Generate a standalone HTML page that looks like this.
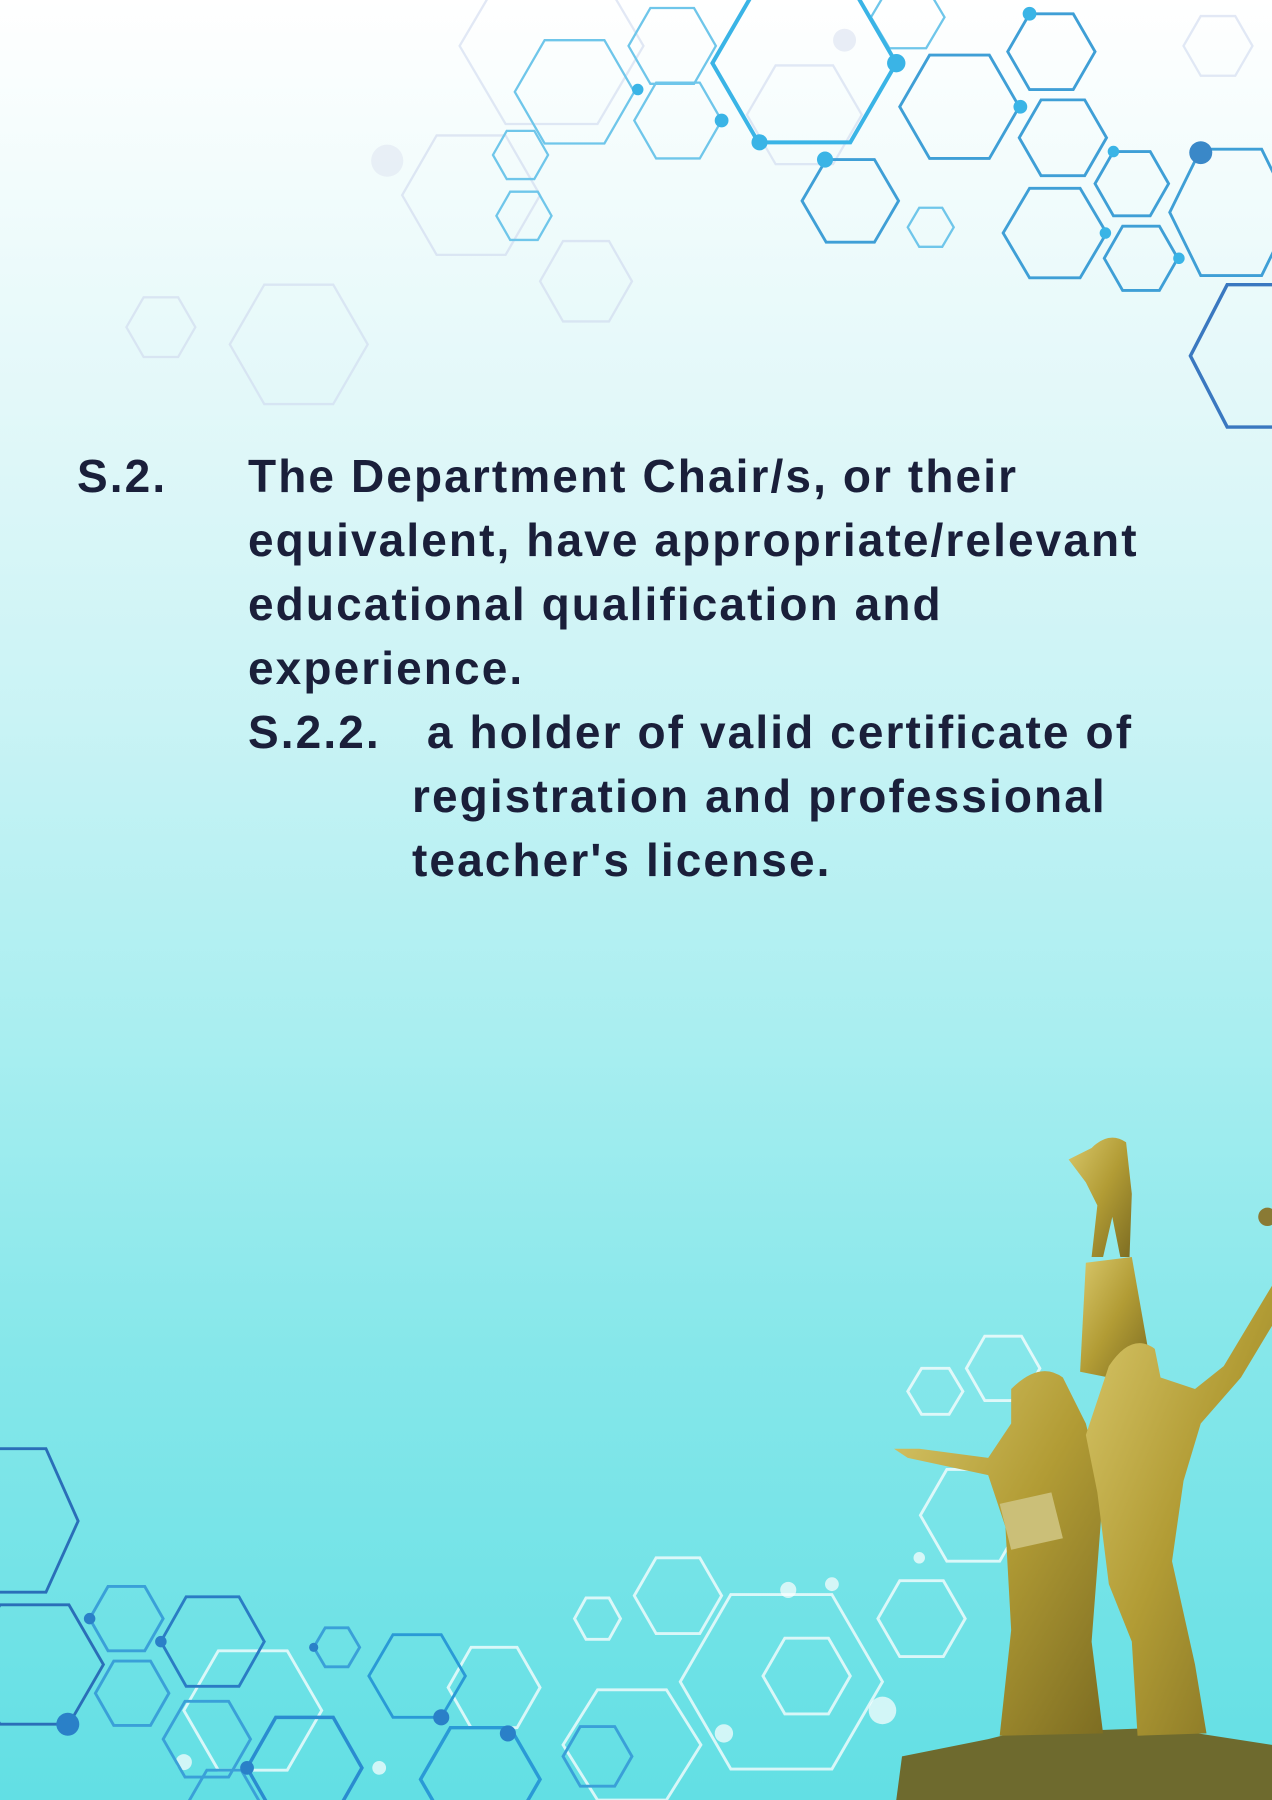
<!DOCTYPE html>
<html><head><meta charset="utf-8"><style>
html,body{margin:0;padding:0}
body{width:1272px;height:1800px;position:relative;overflow:hidden;
background:linear-gradient(180deg,#ffffff 0%,#f2fcfc 10%,#e3f8f9 22%,#c9f3f5 40%,#a8eef0 58%,#86e7ea 75%,#62dfe4 100%);
font-family:"Liberation Sans",sans-serif;color:#1a1f3a}
svg{position:absolute;left:0;top:0}
.t{position:absolute;font-size:46px;font-weight:bold;line-height:64px;letter-spacing:2.1px;white-space:nowrap}
</style></head><body>
<svg width="1272" height="1800" viewBox="0 0 1107 1568" preserveAspectRatio="none">
<defs>
<linearGradient id="g" x1="0" y1="0" x2="1" y2="1"><stop offset="0" stop-color="#d8c76a"/><stop offset=".5" stop-color="#b29c35"/><stop offset="1" stop-color="#7d6d22"/></linearGradient>
</defs>
<g fill="none" stroke-width="2">
<g stroke="#cfd8ee" opacity=".6">
<polygon points="560,40 520,108 440,108 400,40 440,-28 520,-28"/>
<polygon points="470,170 440,222 380,222 350,170 380,118 440,118"/>
<polygon points="550,245 530,280 490,280 470,245 490,210 530,210"/>
<polygon points="320,300 290,352 230,352 200,300 230,248 290,248"/>
<polygon points="170,285 155,311 125,311 110,285 125,259 155,259"/>
<polygon points="750,100 725,143 675,143 650,100 675,57 725,57"/>
<polygon points="1090,40 1075,66 1045,66 1030,40 1045,14 1075,14"/>
</g>
<g stroke="#6fc6ea" stroke-width="2">
<polygon points="552,80 526,125 474,125 448,80 474,35 526,35"/>
<polygon points="623,40 604,73 566,73 547,40 566,7 604,7"/>
<polygon points="628,105 609,138 571,138 552,105 571,72 609,72"/>
<polygon points="477,135 465,156 441,156 429,135 441,114 465,114"/>
<polygon points="480,188 468,209 444,209 432,188 444,167 468,167"/>
<polygon points="830,198 820,215 800,215 790,198 800,181 820,181"/>
<polygon points="822,15 806,42 774,42 758,15 774,-12 806,-12"/>
</g>
<g stroke="#3ab4e6" stroke-width="3.5">
<polygon points="780,55 740,124 660,124 620,55 660,-14 740,-14"/>
</g>
<g stroke="#3f9fd6" stroke-width="2.5">
<polygon points="887,93 861,138 809,138 783,93 809,48 861,48"/>
<polygon points="782,175 761,211 719,211 698,175 719,139 761,139"/>
<polygon points="953,45 934,78 896,78 877,45 896,12 934,12"/>
<polygon points="963,120 944,153 906,153 887,120 906,87 944,87"/>
<polygon points="963,203 940,242 896,242 873,203 896,164 940,164"/>
<polygon points="1017,160 1001,188 969,188 953,160 969,132 1001,132"/>
<polygon points="1025,225 1009,253 977,253 961,225 977,197 1009,197"/>
<polygon points="1125,185 1098,240 1045,240 1018,185 1045,130 1098,130"/>
<polygon points="1140,310 1108,372 1068,372 1036,310 1068,248 1108,248" stroke="#3a78c0" stroke-width="3"/>
</g>
<g fill="#3ab4e6" stroke="none">
<circle cx="661" cy="124" r="7"/><circle cx="780" cy="55" r="8"/><circle cx="718" cy="139" r="7"/><circle cx="628" cy="105" r="6"/><circle cx="896" cy="12" r="6"/><circle cx="888" cy="93" r="6"/><circle cx="969" cy="132" r="5"/><circle cx="962" cy="203" r="5"/><circle cx="1026" cy="225" r="5"/><circle cx="555" cy="78" r="5"/>
<circle cx="1045" cy="133" r="10" fill="#3a88c8"/>
</g>
<circle cx="337" cy="140" r="14" fill="#dfe6f2" opacity=".6"/>
<circle cx="735" cy="35" r="10" fill="#dfe6f2" opacity=".7"/>
<g stroke="#ffffff" opacity=".75" stroke-width="2.5">
<polygon points="768,1465 724,1541 636,1541 592,1465 636,1389 724,1389"/>
<polygon points="740,1460 721,1493 683,1493 664,1460 683,1427 721,1427"/>
<polygon points="628,1390 609,1423 571,1423 552,1390 571,1357 609,1357"/>
<polygon points="893,1320 870,1360 824,1360 801,1320 824,1280 870,1280"/>
<polygon points="905,1192 889,1220 857,1220 841,1192 857,1164 889,1164"/>
<polygon points="838,1212 826,1232 802,1232 790,1212 802,1192 826,1192"/>
<polygon points="840,1410 821,1443 783,1443 764,1410 783,1377 821,1377"/>
<polygon points="540,1410 530,1428 510,1428 500,1410 510,1392 530,1392"/>
<polygon points="610,1520 580,1568 520,1568 490,1520 520,1472 580,1472"/>
<polygon points="280,1490 250,1542 190,1542 160,1490 190,1438 250,1438"/>
<polygon points="470,1470 450,1505 410,1505 390,1470 410,1435 450,1435"/>
</g>
<g fill="#ffffff" opacity=".7"><circle cx="768" cy="1490" r="12"/><circle cx="686" cy="1385" r="7"/><circle cx="724" cy="1380" r="6"/><circle cx="630" cy="1510" r="8"/><circle cx="330" cy="1540" r="6"/><circle cx="160" cy="1535" r="7"/><circle cx="800" cy="1357" r="5"/></g>
<g stroke="#3aa0d8" stroke-width="2.5">
<polygon points="68,1325 40,1387 -25,1387 -50,1325 -25,1262 40,1262" stroke="#2a6eb8"/>
<polygon points="90,1450 60,1502 0,1502 -30,1450 0,1398 60,1398" stroke="#2a6eb8"/>
<polygon points="142,1410 126,1438 94,1438 78,1410 94,1382 126,1382"/>
<polygon points="230,1430 208,1469 162,1469 140,1430 162,1391 208,1391" stroke="#2a7cc4"/>
<polygon points="147,1475 131,1503 99,1503 83,1475 99,1447 131,1447"/>
<polygon points="218,1515 199,1548 161,1548 142,1515 161,1482 199,1482"/>
<polygon points="315,1540 290,1584 240,1584 215,1540 240,1496 290,1496" stroke="#2a8cd0" stroke-width="3"/>
<polygon points="313,1435 303,1452 283,1452 273,1435 283,1418 303,1418"/>
<polygon points="405,1460 384,1496 342,1496 321,1460 342,1424 384,1424" stroke="#2a9ad6"/>
<polygon points="470,1550 444,1595 392,1595 366,1550 392,1505 444,1505" stroke="#2a9ad6" stroke-width="3"/>
<polygon points="550,1530 535,1556 505,1556 490,1530 505,1504 535,1504"/>
<polygon points="225,1568 210,1594 180,1594 165,1568 180,1542 210,1542"/>
</g>
<g fill="#2a80c8"><circle cx="59" cy="1502" r="10"/><circle cx="78" cy="1410" r="5"/><circle cx="140" cy="1430" r="5"/><circle cx="215" cy="1540" r="6"/><circle cx="384" cy="1496" r="7"/><circle cx="442" cy="1510" r="7"/><circle cx="273" cy="1435" r="4"/></g>
</g>
<g fill="url(#g)">
<path d="M780,1568 L785,1530 L860,1515 L880,1510 L1010,1505 L1107,1520 L1107,1568 Z" fill="#6e6a2e"/>
<path d="M945,1100 L985,1095 L1000,1180 L965,1200 L940,1195 Z"/>
<path d="M950,1000 Q965,985 980,995 L985,1040 L983,1095 L975,1095 L968,1060 L960,1095 L950,1095 L955,1050 L945,1030 L930,1010 Z"/>
<path d="M880,1210 Q905,1185 925,1200 L945,1240 L960,1300 L950,1430 L960,1510 L870,1512 L880,1420 L875,1330 L860,1285 L790,1270 L778,1262 L800,1262 L860,1270 L880,1240 Z"/>
<path d="M870,1310 L915,1300 L925,1340 L880,1350 Z" fill="#cbbf78"/>
<path d="M965,1190 Q985,1160 1005,1175 L1010,1200 L1040,1210 L1065,1190 L1095,1140 L1107,1120 L1107,1155 L1080,1200 L1045,1240 L1030,1290 L1020,1360 L1040,1450 L1050,1510 L990,1512 L985,1430 L965,1380 L955,1300 L945,1250 Z"/>
<circle cx="1103" cy="1060" r="8" fill="#8a7a34"/>
</g>
</svg>
<div class="t" style="left:77px;top:444px">S.2.</div>
<div class="t" style="left:248px;top:444px">The Department Chair/s, or their<br>equivalent, have appropriate/relevant<br>educational qualification and<br>experience.</div>
<div class="t" style="left:248px;top:700px">S.2.2.</div>
<div class="t" style="left:412px;top:700px">&nbsp;a holder of valid certificate of<br>registration and professional<br>teacher's license.</div>
</body></html>
